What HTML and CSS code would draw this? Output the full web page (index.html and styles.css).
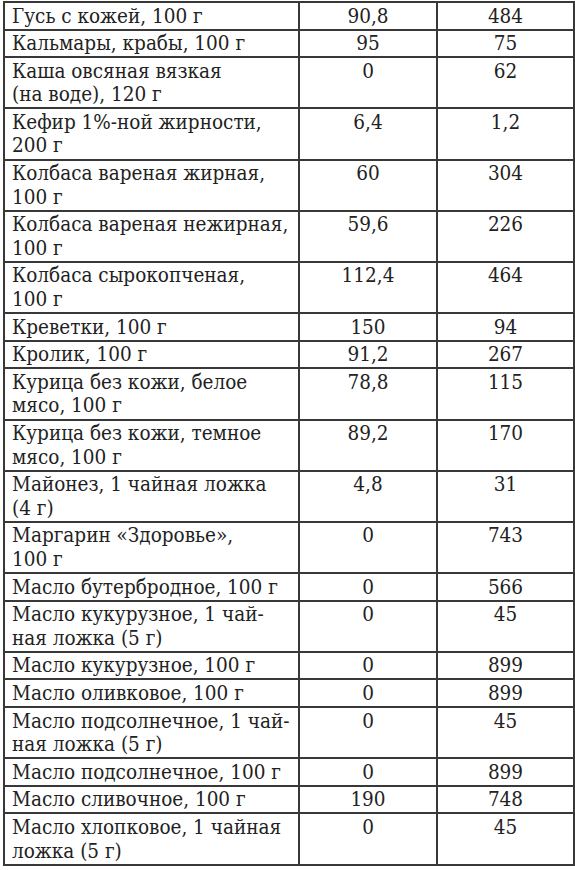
FILE: index.html
```html
<!DOCTYPE html>
<html lang="ru">
<head>
<meta charset="utf-8">
<link rel="stylesheet" href="styles.css">
</head>
<body>
<table class="food">
<colgroup><col class="c-name"><col class="c-num"><col class="c-num2"></colgroup>
<tbody>
<tr><td>Гусь с кожей, 100 г</td><td class="n">90,8</td><td class="n">484</td></tr>
<tr><td>Кальмары, крабы, 100 г</td><td class="n">95</td><td class="n">75</td></tr>
<tr><td>Каша овсяная вязкая<br>(на воде), 120 г</td><td class="n">0</td><td class="n">62</td></tr>
<tr><td>Кефир 1%-ной жирности,<br>200 г</td><td class="n">6,4</td><td class="n">1,2</td></tr>
<tr><td>Колбаса вареная жирная,<br>100 г</td><td class="n">60</td><td class="n">304</td></tr>
<tr><td>Колбаса вареная нежирная,<br>100 г</td><td class="n">59,6</td><td class="n">226</td></tr>
<tr><td>Колбаса сырокопченая,<br>100 г</td><td class="n">112,4</td><td class="n">464</td></tr>
<tr><td>Креветки, 100 г</td><td class="n">150</td><td class="n">94</td></tr>
<tr><td>Кролик, 100 г</td><td class="n">91,2</td><td class="n">267</td></tr>
<tr><td>Курица без кожи, белое<br>мясо, 100 г</td><td class="n">78,8</td><td class="n">115</td></tr>
<tr><td>Курица без кожи, темное<br>мясо, 100 г</td><td class="n">89,2</td><td class="n">170</td></tr>
<tr><td>Майонез, 1 чайная ложка<br>(4 г)</td><td class="n">4,8</td><td class="n">31</td></tr>
<tr><td>Маргарин «Здоровье»,<br>100 г</td><td class="n">0</td><td class="n">743</td></tr>
<tr><td>Масло бутербродное, 100 г</td><td class="n">0</td><td class="n">566</td></tr>
<tr><td>Масло кукурузное, 1 чай-<br>ная ложка (5 г)</td><td class="n">0</td><td class="n">45</td></tr>
<tr><td>Масло кукурузное, 100 г</td><td class="n">0</td><td class="n">899</td></tr>
<tr><td>Масло оливковое, 100 г</td><td class="n">0</td><td class="n">899</td></tr>
<tr><td>Масло подсолнечное, 1 чай-<br>ная ложка (5 г)</td><td class="n">0</td><td class="n">45</td></tr>
<tr><td>Масло подсолнечное, 100 г</td><td class="n">0</td><td class="n">899</td></tr>
<tr><td>Масло сливочное, 100 г</td><td class="n">190</td><td class="n">748</td></tr>
<tr><td>Масло хлопковое, 1 чайная<br>ложка (5 г)</td><td class="n">0</td><td class="n">45</td></tr>
</tbody>
</table>
</body>
</html>
```
FILE: styles.css
```css
html, body {
  margin: 0;
  padding: 0;
  background: #ffffff;
}
body {
  padding: 1px 0 0 3px;
}
.food {
  border-collapse: collapse;
  table-layout: fixed;
  width: 570px;
  font-family: "DejaVu Serif", "Liberation Serif", serif;
  font-stretch: condensed;
  font-size: 20.5px;
  line-height: 23.6px;
  color: #222222;
}
.c-name { width: 295px; }
.c-num { width: 138px; }
.c-num2 { width: 137px; }
.food td {
  border: 2px solid #383838;
  padding: 1.5px 4px 0.5px 7px;
  vertical-align: top;
  white-space: nowrap;
}
.food td.n {
  text-align: center;
  padding-left: 0;
  padding-right: 0;
}
```
